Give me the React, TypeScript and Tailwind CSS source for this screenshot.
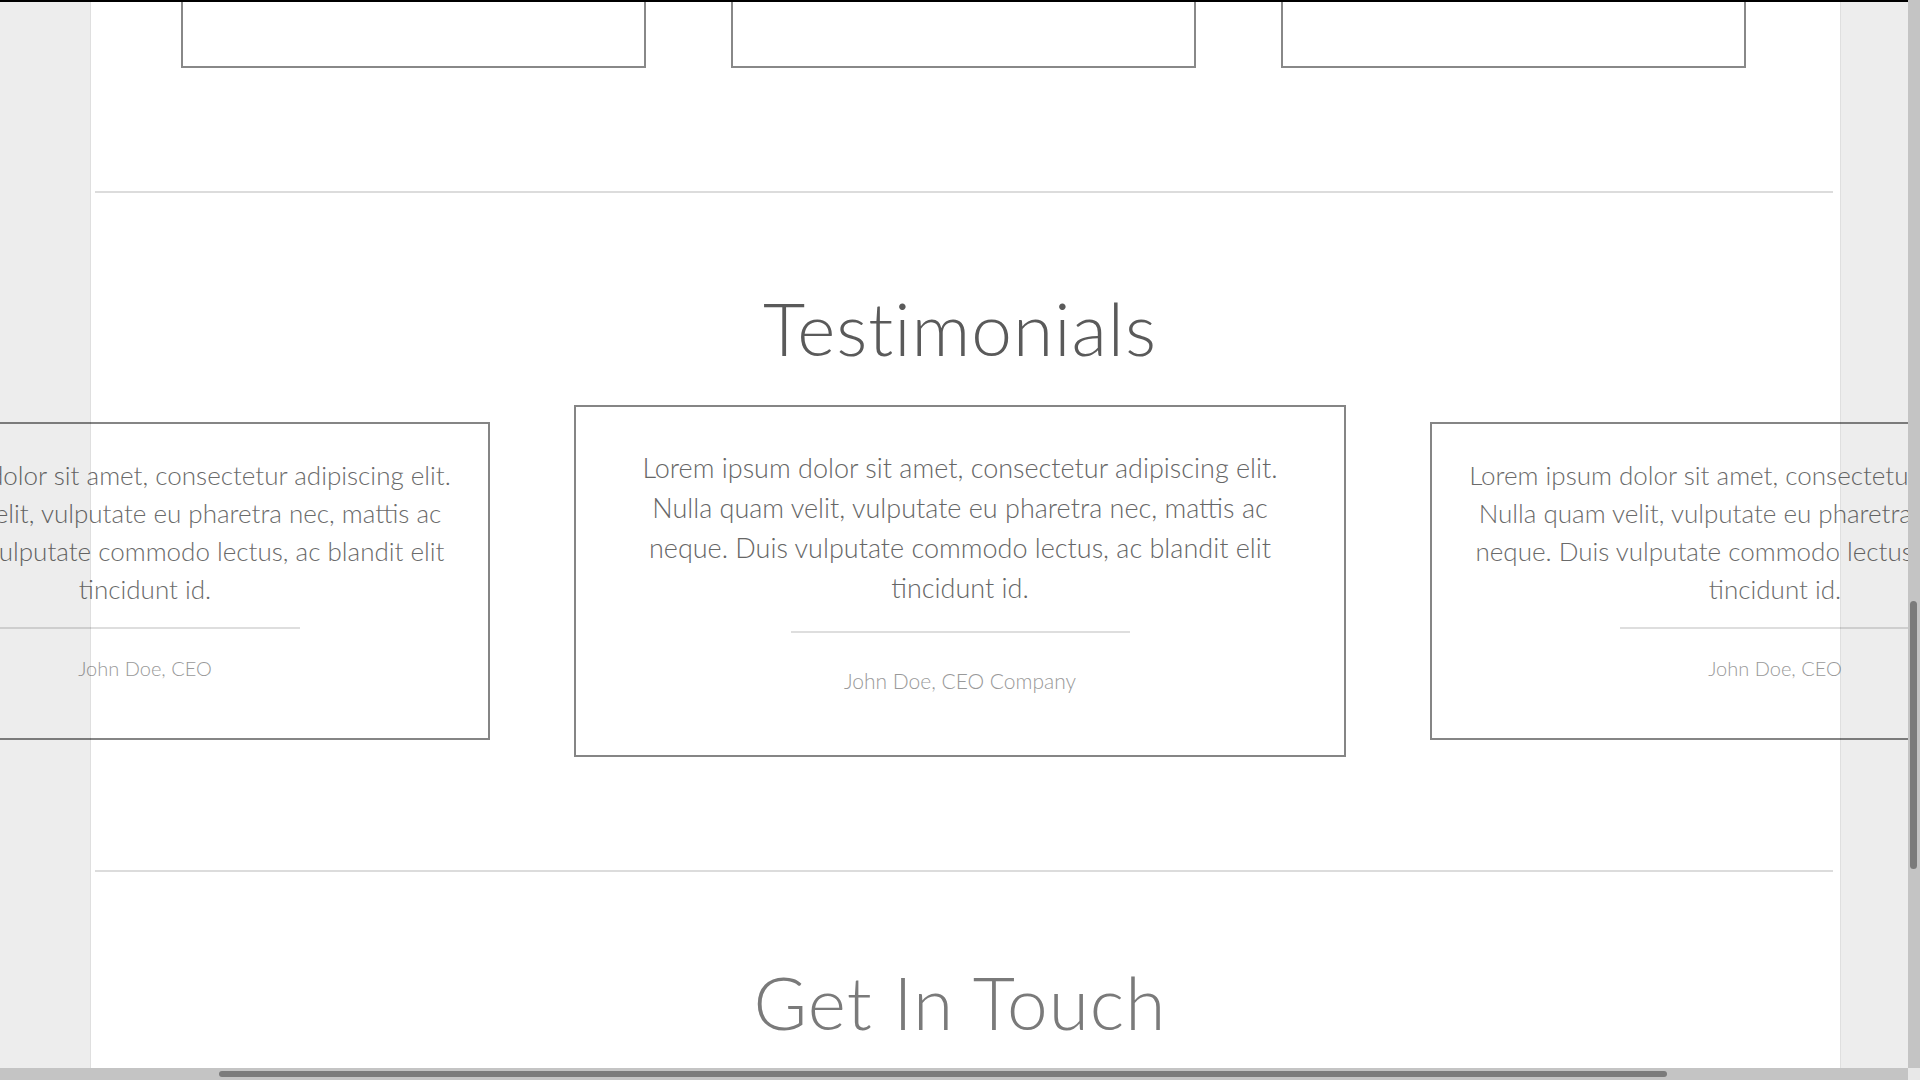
import React from "react";

const quote = [
  "Lorem ipsum dolor sit amet, consectetur adipiscing elit.",
  "Nulla quam velit, vulputate eu pharetra nec, mattis ac",
  "neque. Duis vulputate commodo lectus, ac blandit elit",
  "tincidunt id.",
];

function QuoteLines() {
  return (
    <>
      {quote.map((line, i) => (
        <span key={i} className="block whitespace-nowrap">
          {line}
        </span>
      ))}
    </>
  );
}

function SideCard({ author }: { author: string }) {
  return (
    <div className="flex h-[318px] w-[690px] shrink-0 flex-col items-center border-2 border-[#858585] bg-white pt-[32px]">
      <p className="text-center text-[26px] leading-[38px] text-[#6a6a6a]">
        <QuoteLines />
      </p>
      <div className="mt-[19px] h-[2px] w-[310px] bg-[#dedede]" />
      <p className="mt-[25px] text-[20px] leading-[28px] text-[#999]">{author}</p>
    </div>
  );
}

function MainCard() {
  return (
    <div className="flex h-[352px] w-[772px] shrink-0 flex-col items-center border-2 border-[#858585] bg-white pt-[41px]">
      <p className="text-center text-[27px] leading-[40px] text-[#666]">
        <QuoteLines />
      </p>
      <div className="mt-[23px] h-[2px] w-[339px] bg-[#dedede]" />
      <p className="mt-[34px] text-[21px] leading-[28px] text-[#999]">
        John Doe, CEO Company
      </p>
    </div>
  );
}

export default function App() {
  return (
    <div className="relative h-screen w-screen overflow-hidden bg-white font-['Lato','Liberation_Sans',sans-serif] font-light">
      {/* page content */}
      <div className="flex w-full flex-col">
        <div className="flex gap-[85px] pl-[181px]">
          <div className="h-[68px] w-[465px] border-2 border-t-0 border-[#888]" />
          <div className="h-[68px] w-[465px] border-2 border-t-0 border-[#888]" />
          <div className="h-[68px] w-[465px] border-2 border-t-0 border-[#888]" />
        </div>

        <div className="ml-[95px] mt-[123px] h-[2px] w-[1738px] bg-[#dcdcdc]" />

        <h2 className="mt-[99px] text-center text-[73px] leading-[73px] tracking-[1px] text-[#5a5a5a]">
          Testimonials
        </h2>

        <div className="mt-[40px] flex h-[352px] w-full items-center justify-center gap-[84px] overflow-hidden">
          <SideCard author="John Doe, CEO" />
          <MainCard />
          <SideCard author="John Doe, CEO" />
        </div>

        <div className="ml-[95px] mt-[113px] h-[2px] w-[1738px] bg-[#dcdcdc]" />

        <h2 className="mt-[94px] text-center text-[73px] leading-[73px] tracking-[1px] text-[#7a7a7a]">
          Get In Touch
        </h2>
      </div>

      {/* frame overlays */}
      <div className="absolute left-0 top-0 h-[2px] w-[1908px] bg-black" />
      <div className="absolute bottom-0 left-0 top-[2px] w-[91px] border-r border-[rgba(0,0,0,0.06)] bg-[rgba(0,0,0,0.07)]" />
      <div className="absolute bottom-0 left-[1840px] top-[2px] w-[68px] border-l border-[rgba(0,0,0,0.06)] bg-[rgba(0,0,0,0.07)]" />

      {/* scrollbars */}
      <div className="absolute right-0 top-0 h-[1068px] w-[12px] bg-[#c4c4c4]">
        <div className="ml-[2px] mt-[601px] h-[268px] w-[7px] rounded-full bg-[#7b7b7b]" />
      </div>
      <div className="absolute bottom-0 left-0 h-[12px] w-[1908px] bg-[#c4c4c4] pt-[3px]">
        <div className="ml-[219px] h-[6px] w-[1448px] rounded-full bg-[#7b7b7b]" />
      </div>
      <div className="absolute bottom-0 right-0 h-[12px] w-[12px] bg-[#e8e8e8]" />
    </div>
  );
}
